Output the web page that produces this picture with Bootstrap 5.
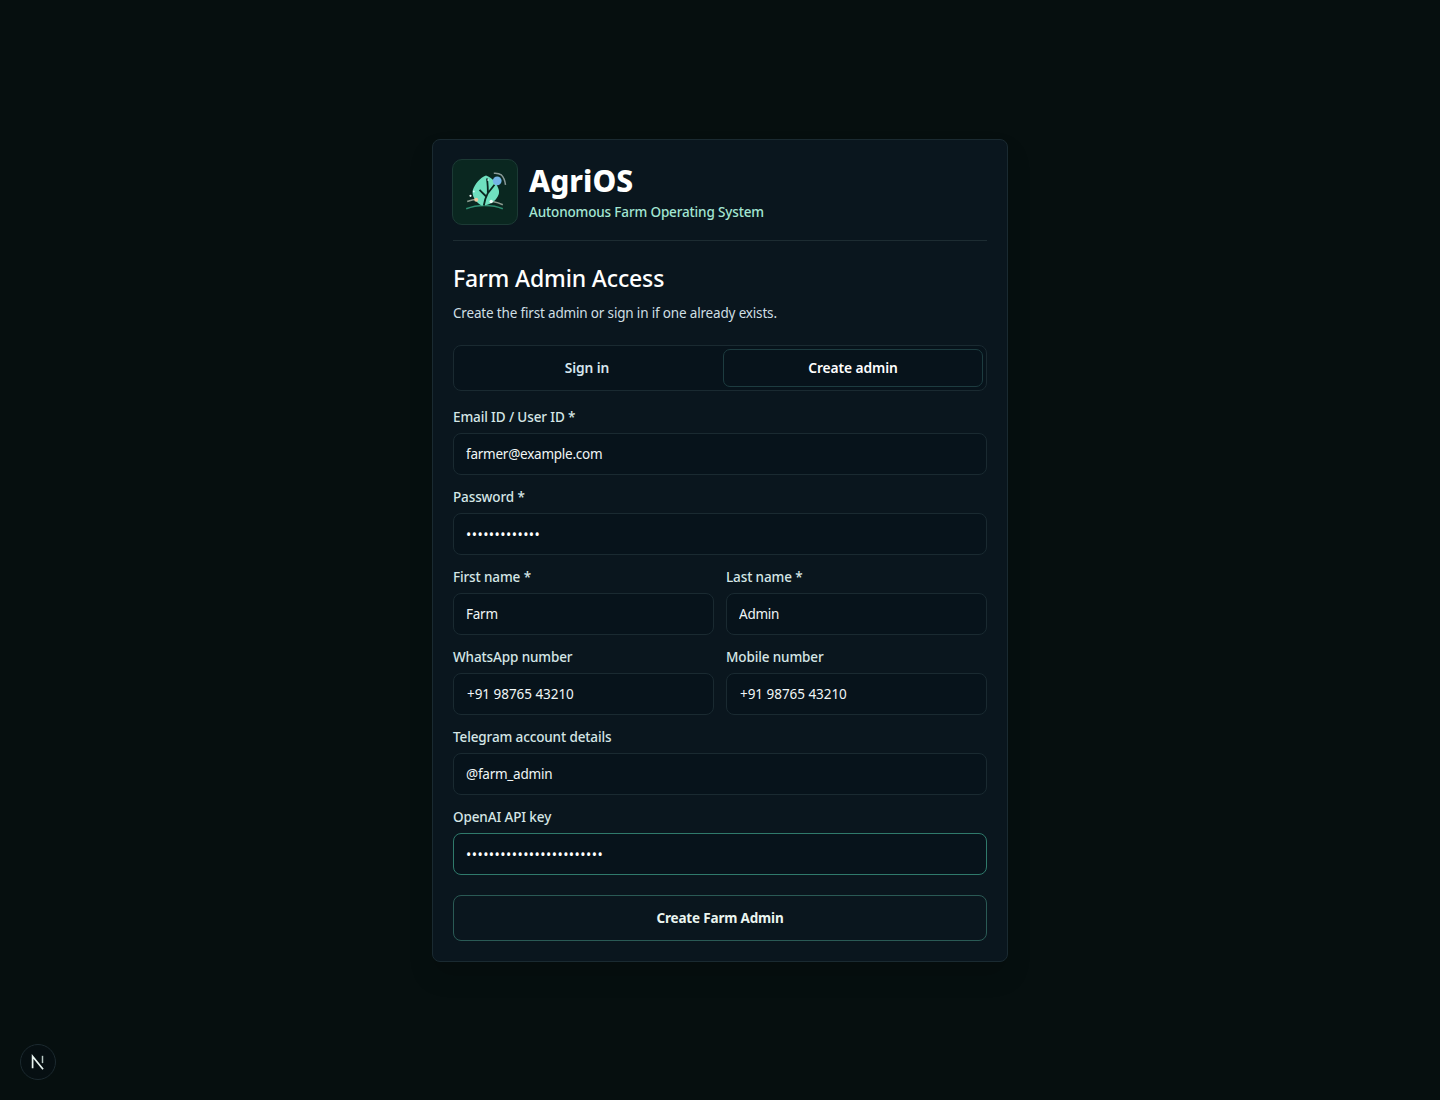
<!DOCTYPE html>
<html lang="en">
<head>
<meta charset="utf-8">
<title>AgriOS</title>
<link href="https://cdn.jsdelivr.net/npm/bootstrap@5.3.0/dist/css/bootstrap.min.css" rel="stylesheet">
<style>
html,body{height:100%}
body{background:#060f0f;color:#e8f1f2;font-family:"Noto Sans","Open Sans",sans-serif;}
.stage{min-height:1100px;padding-top:139px}
.panel{width:576px;background:#0a161e;border:1px solid #1a2a31;border-radius:8px;padding:19px 20px 20px;box-shadow:0 14px 24px rgba(0,0,0,.14)}
.brand-row{gap:11px;padding-bottom:15px;border-bottom:1px solid #1d2c32;margin-bottom:22px}
.brand-logo{width:66px;height:66px;margin-left:-1px;background:#0a2720;border:1px solid #1c3a35;border-radius:10px;flex:none}
.brand-name{font-size:30px;line-height:36px;font-weight:800;color:#fff;margin:1px 0 -1px}
.brand-tag{font-size:13.5px;line-height:20px;font-weight:500;letter-spacing:-.15px;color:#a3e6d3;margin-top:4px}
.form-title{font-size:23px;line-height:30px;font-weight:500;letter-spacing:-.15px;color:#fff;margin:0 0 10px}
.form-sub{font-size:13.5px;line-height:20px;letter-spacing:-.17px;color:#cfdfe4;margin:0 0 22px}
.seg{border:1px solid #1a2a31;border-radius:8px;background:#07131b;padding:3px;margin-bottom:16px;gap:6px}
.seg-btn{flex:1;height:38px;border:1px solid transparent;border-radius:7px;background:transparent;font-size:13.8px;font-weight:600;letter-spacing:-.1px;color:#d5e6ee;padding:0}
.seg-btn.on{border-color:#1d3c40;color:#fff;background:#07131b}
.fld-label{display:block;font-size:13.5px;line-height:20px;font-weight:500;letter-spacing:-.12px;color:#d5e6e6;margin-bottom:6px}
.fld-input{display:block;width:100%;height:42px;background:#07131b;border:1px solid #1a2a31;border-radius:8px;padding:0 12px;font-size:13.5px;letter-spacing:-.24px;color:#f0f6f6;font-family:inherit;outline:0}
.fld-input[type=password]{font-size:14px;letter-spacing:.45px;color:#fff}
.fld-input[type=tel]{padding-left:13px;letter-spacing:-.04px}
.fld-input.act{border-color:#2f7a6b}
.fld-gap{margin-bottom:12px}
.two-up{display:grid;grid-template-columns:1fr 1fr;gap:12px}
.go-btn{display:block;width:100%;height:46px;margin-top:20px;background:transparent;border:1px solid #2a5a55;border-radius:8px;font-size:13.5px;font-weight:700;letter-spacing:-.18px;color:#eaf5f0}
.dev-badge{position:fixed;left:20px;bottom:20px;width:36px;height:36px;border-radius:50%;background:#060f12;border:1px solid #1c2a30}
</style>
</head>
<body>
<div class="stage d-flex justify-content-center align-items-start">
  <main class="panel">
    <div class="brand-row d-flex align-items-center">
      <div class="brand-logo">
        <svg width="64" height="64" viewBox="1 1 64 64" class="d-block">
          <path d="M14.200 49.800C20 47.500 27 46.500 32.500 46.500s13 1 18.300 3.300" fill="none" stroke="#2e8f72" stroke-width="1.700"/>
          <path d="M15.200 42.500c3-1 6-1.900 9-2.300M40.800 42.500c3.500.7 7 1.800 10 3.300" fill="none" stroke="#8d9c90" stroke-width="1.600"/>
          <path d="M34 16.500C28 18.500 23 25 20.800 31 19.500 36 23 43 29.500 46.500 36 47 43 43 46 37 49 32 45 26 42 22 40 19.500 37 17.500 34 16.500z" fill="#6fe0bf"/>
          <path d="M42.500 25.800L35.800 34.200C33.800 38 32.500 42 31.800 46.500M27.500 30.800L34.200 37.500M35 19.500C35.500 24 36 29 35.800 33.500" fill="none" stroke="#0a2720" stroke-width="1.800"/>
          <circle cx="45.200" cy="21.800" r="4.400" fill="#74b4e6"/>
          <path d="M41.800 14.200C44.500 14 47.500 14.500 49.200 15.800 51.500 18 53 22 53.500 25.800" fill="none" stroke="#8a9a98" stroke-width="1.500"/>
          <circle cx="24.200" cy="40.800" r="2" fill="#f0c9a0"/><circle cx="39.200" cy="42.500" r="1.700" fill="#f4fffb"/><circle cx="18.500" cy="36.800" r="1.100" fill="#fff"/><circle cx="21.800" cy="32.500" r=".9" fill="#dff"/><circle cx="36" cy="21" r=".8" fill="#dff"/>
        </svg>
      </div>
      <div>
        <h1 class="brand-name">AgriOS</h1>
        <div class="brand-tag">Autonomous Farm Operating System</div>
      </div>
    </div>
    <h2 class="form-title">Farm Admin Access</h2>
    <p class="form-sub">Create the first admin or sign in if one already exists.</p>
    <div class="seg d-flex">
      <button type="button" class="seg-btn">Sign in</button>
      <button type="button" class="seg-btn on">Create admin</button>
    </div>
    <form>
      <div class="fld-gap"><label class="fld-label">Email ID / User ID *</label><input class="fld-input" type="text" value="farmer@example.com"></div>
      <div class="fld-gap"><label class="fld-label">Password *</label><input class="fld-input" type="password" value="Password12345"></div>
      <div class="two-up fld-gap">
        <div><label class="fld-label">First name *</label><input class="fld-input" type="text" value="Farm"></div>
        <div><label class="fld-label">Last name *</label><input class="fld-input" type="text" value="Admin"></div>
      </div>
      <div class="two-up fld-gap">
        <div><label class="fld-label">WhatsApp number</label><input class="fld-input" type="tel" value="+91 98765 43210"></div>
        <div><label class="fld-label">Mobile number</label><input class="fld-input" type="tel" value="+91 98765 43210"></div>
      </div>
      <div class="fld-gap"><label class="fld-label">Telegram account details</label><input class="fld-input" type="text" value="@farm_admin"></div>
      <div><label class="fld-label">OpenAI API key</label><input class="fld-input act" type="password" value="sk-abcdefghijklmnopqrstu"></div>
      <button type="button" class="go-btn">Create Farm Admin</button>
    </form>
  </main>
</div>
<div class="dev-badge d-flex align-items-center justify-content-center">
  <svg width="18" height="18" viewBox="0 0 16 16"><path d="M3.200 13.500V3L12.500 14.500" fill="none" stroke="#e8f4f0" stroke-width="1.500"/><path d="M12 2.500v6.500" stroke="#b8c8c4" stroke-width="1.300" fill="none"/></svg>
</div>
<script src="https://cdn.jsdelivr.net/npm/bootstrap@5.3.0/dist/js/bootstrap.bundle.min.js"></script>
</body>
</html>
